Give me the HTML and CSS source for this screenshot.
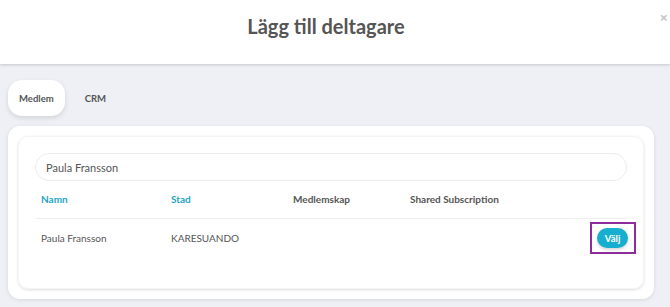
FILE: index.html
```html
<!DOCTYPE html>
<html lang="sv">
  <head>
    <meta charset="UTF-8" />
    <meta name="viewport" content="width=device-width, initial-scale=1.0" />
    <title>Lägg till deltagare</title>
    <link rel="stylesheet" href="styles.css">
  </head>
  <body>
    <div class="modal">
      <div class="modal-head">
        <h2 class="modal-title">Lägg till deltagare</h2>
        <button class="close-btn">×</button>
      </div>
      <div class="modal-body">
        <ul class="tabs">
          <li class="tab active">Medlem</li>
          <li class="tab">CRM</li>
        </ul>
        <div class="card">
          <div class="card-inner">
            <input class="search" type="text" value="Paula Fransson" />
            <div class="table">
              <div class="table-row table-head">
                <span class="col sortable">Namn</span>
                <span class="col sortable">Stad</span>
                <span class="col">Medlemskap</span>
                <span class="col">Shared Subscription</span>
                <span class="col"></span>
              </div>
              <div class="table-row">
                <span class="col">Paula Fransson</span>
                <span class="col">KARESUANDO</span>
                <span class="col"></span>
                <span class="col"></span>
                <span class="col col-action">
                  <span class="highlight"><button class="pick-btn">Välj</button></span>
                </span>
              </div>
            </div>
          </div>
        </div>
      </div>
    </div>
  </body>
</html>
```

FILE: styles.css
```css
* {
  margin: 0;
  padding: 0;
  list-style: none;
  box-sizing: border-box;
  text-decoration: none;
}
body {
  background: #eff0f5;
  font-family: Lato, "Noto Sans", sans-serif;
  color: #555;
}
.modal-head {
  position: relative;
  height: 64px;
  background: #fff;
  box-shadow: 0 1px 3px rgba(0, 0, 0, 0.18);
  display: flex;
  align-items: center;
  justify-content: center;
  padding: 0 18px 12px 0;
}
.modal-title {
  font-size: 20px;
  font-weight: 700;
  color: #555;
}
.close-btn {
  position: absolute;
  top: 10px;
  right: 2px;
  border: 0 none;
  background: transparent;
  color: #c8c8c8;
  font-family: "Noto Sans", sans-serif;
  font-size: 15px;
  font-weight: 700;
  line-height: 1;
}
.modal-body {
  padding: 16px 16px 10px 8px;
}
.tabs {
  display: flex;
  align-items: center;
  gap: 9px;
  margin-bottom: 10px;
}
.tab {
  height: 36px;
  padding: 0 11px;
  display: flex;
  align-items: center;
  font-size: 9.5px;
  font-weight: 700;
  color: #555;
  border-radius: 14px;
}
.tab.active {
  background: #fff;
  box-shadow: 0 2px 5px rgba(0, 0, 0, 0.12);
}
.card {
  background: #fff;
  border-radius: 12px;
  padding: 10px;
  box-shadow: 0 1px 4px rgba(0, 0, 0, 0.1);
}
.card-inner {
  border-radius: 10px;
  padding: 16px 16px 31px;
  box-shadow: 0 1px 3px rgba(0, 0, 0, 0.14);
  border: 1px solid #f4f4f4;
}
.search {
  display: block;
  width: 100%;
  height: 28px;
  border: 1px solid #ececec;
  border-radius: 14px;
  padding: 0 10px;
  font-family: inherit;
  font-size: 11px;
  color: #555;
  outline: none;
}
.table-row {
  display: grid;
  grid-template-columns: 130px 122px 117px 1fr auto;
  align-items: center;
  font-size: 10px;
}
.table-head {
  height: 38px;
  padding-bottom: 2px;
  border-bottom: 1px solid #eee;
  font-size: 10px;
  font-weight: 700;
}
.table-row .col {
  padding-left: 6px;
}
.sortable {
  color: #1ea4c9;
}
.table-row:not(.table-head) {
  height: 38px;
}
.col-action {
  justify-self: end;
  margin-right: -9px;
}
.highlight {
  display: block;
  border: 2px solid #8e2c9d;
  padding: 4px 6px 4px 5px;
}
.pick-btn {
  display: block;
  width: 31px;
  height: 20px;
  border: 0 none;
  border-radius: 10px;
  background: #17aecf;
  color: #fff;
  font-family: inherit;
  font-size: 9.5px;
  font-weight: 700;
  box-shadow: 0 2px 3px rgba(0, 0, 0, 0.15);
}
```
